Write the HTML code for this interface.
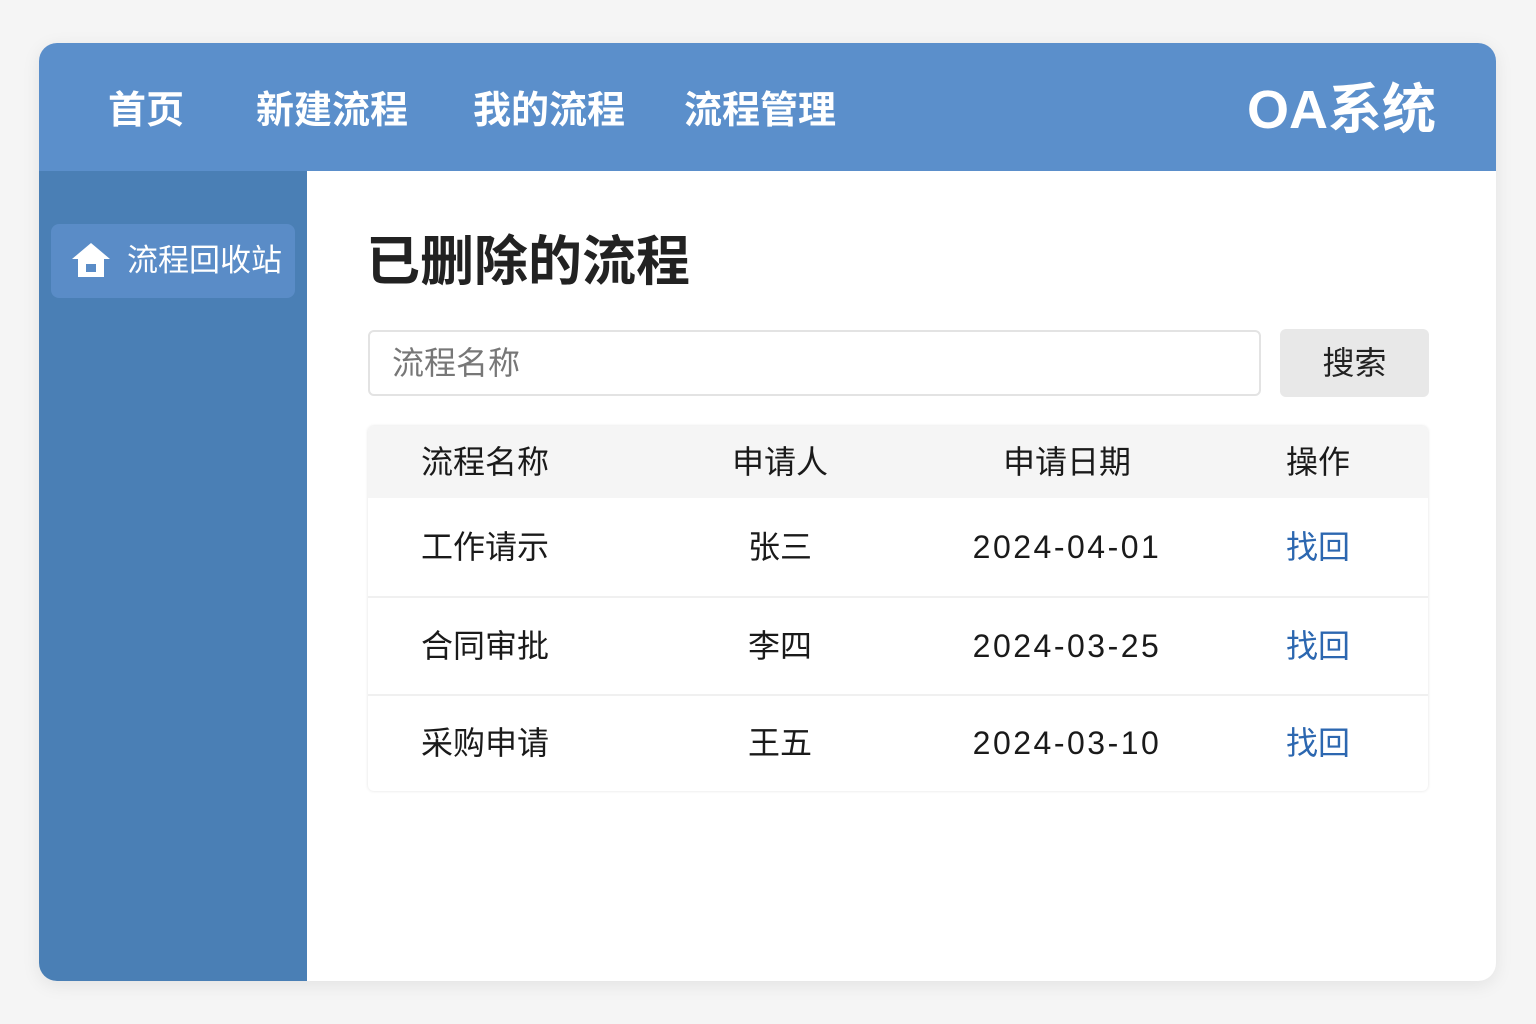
<!DOCTYPE html>
<html><head><meta charset="utf-8"><style>
body{margin:0;width:1536px;height:1024px;background:#f5f5f5;font-family:"Liberation Sans","Noto Sans CJK SC",sans-serif;position:relative;overflow:hidden}
.card{position:absolute;left:39px;top:43px;width:1457px;height:938px;border-radius:18px;background:#fff;overflow:hidden;box-shadow:0 4px 18px rgba(0,0,0,.08)}
.hdr{position:absolute;left:0;top:0;width:100%;height:128px;background:#5b8fcb}
.nav{position:absolute;top:44px;color:#fff;font-size:38px;font-weight:bold;line-height:48px}
.logo{position:absolute;right:60px;top:36px;color:#fff;font-size:54px;font-weight:bold;line-height:62px}
.side{position:absolute;left:0;top:128px;width:268px;height:810px;background:#4a7fb5}
.item{position:absolute;left:12px;top:53px;width:244px;height:74px;border-radius:8px;background:#5a8cc7;color:#fff;font-size:31px;line-height:74px}
.item span{position:absolute;left:76px}
h1{position:absolute;left:327px;top:186px;margin:0;font-size:54px;line-height:66px;color:#222}
.inp{position:absolute;left:329px;top:287px;width:867px;height:62px;border:2px solid #e3e3e3;border-radius:6px;font-size:32px;line-height:62px;color:#777;padding-left:22px;box-sizing:content-box}
.btn{position:absolute;left:1241px;top:286px;width:149px;height:68px;border-radius:6px;background:#e8e8e8;font-size:32px;line-height:68px;text-align:center;color:#222}
.tbl{position:absolute;left:329px;top:383px;width:1060px;height:365px;border-radius:6px;box-shadow:0 0 3px rgba(0,0,0,.12)}
.row{position:absolute;left:0;width:100%;font-size:32px;color:#1a1a1a}
.row div{position:absolute;top:0}
.c1{left:53px}.c2{left:362px;width:100px;text-align:center}.c3{left:580px;width:238px;text-align:center;letter-spacing:2.5px}.c4{left:890px;width:120px;text-align:center}
a{color:#2c67b0;text-decoration:none}
</style></head><body>
<div class="card">
 <div class="hdr">
  <div class="nav" style="left:69px">首页</div>
  <div class="nav" style="left:217px">新建流程</div>
  <div class="nav" style="left:434px">我的流程</div>
  <div class="nav" style="left:645px">流程管理</div>
  <div class="logo">OA系统</div>
 </div>
 <div class="side"><div class="item">
  <svg style="position:absolute;left:20px;top:17px" width="40" height="38" viewBox="0 0 40 38"><path d="M20 2 L1 18 H7 V36 H33 V18 H39 Z" fill="#fff"/><rect x="15" y="23" width="10" height="8" fill="#5a8cc7"/></svg>
  <span>流程回收站</span></div></div>
 <h1>已删除的流程</h1>
 <div class="inp">流程名称</div>
 <div class="btn">搜索</div>
 <div class="tbl">
  <div class="row" style="top:0;height:72px;line-height:72px;background:#f5f5f5;border-radius:6px 6px 0 0"><div class="c1">流程名称</div><div class="c2">申请人</div><div class="c3" style="letter-spacing:0">申请日期</div><div class="c4">操作</div></div>
  <div class="row" style="top:72px;height:98px;line-height:98px;border-bottom:2px solid #f0f0f0"><div class="c1">工作请示</div><div class="c2">张三</div><div class="c3">2024-04-01</div><div class="c4"><a>找回</a></div></div>
  <div class="row" style="top:172px;height:96px;line-height:96px;border-bottom:2px solid #f0f0f0"><div class="c1">合同审批</div><div class="c2">李四</div><div class="c3">2024-03-25</div><div class="c4"><a>找回</a></div></div>
  <div class="row" style="top:270px;height:95px;line-height:95px"><div class="c1">采购申请</div><div class="c2">王五</div><div class="c3">2024-03-10</div><div class="c4"><a>找回</a></div></div>
 </div>
</div>
</body></html>
